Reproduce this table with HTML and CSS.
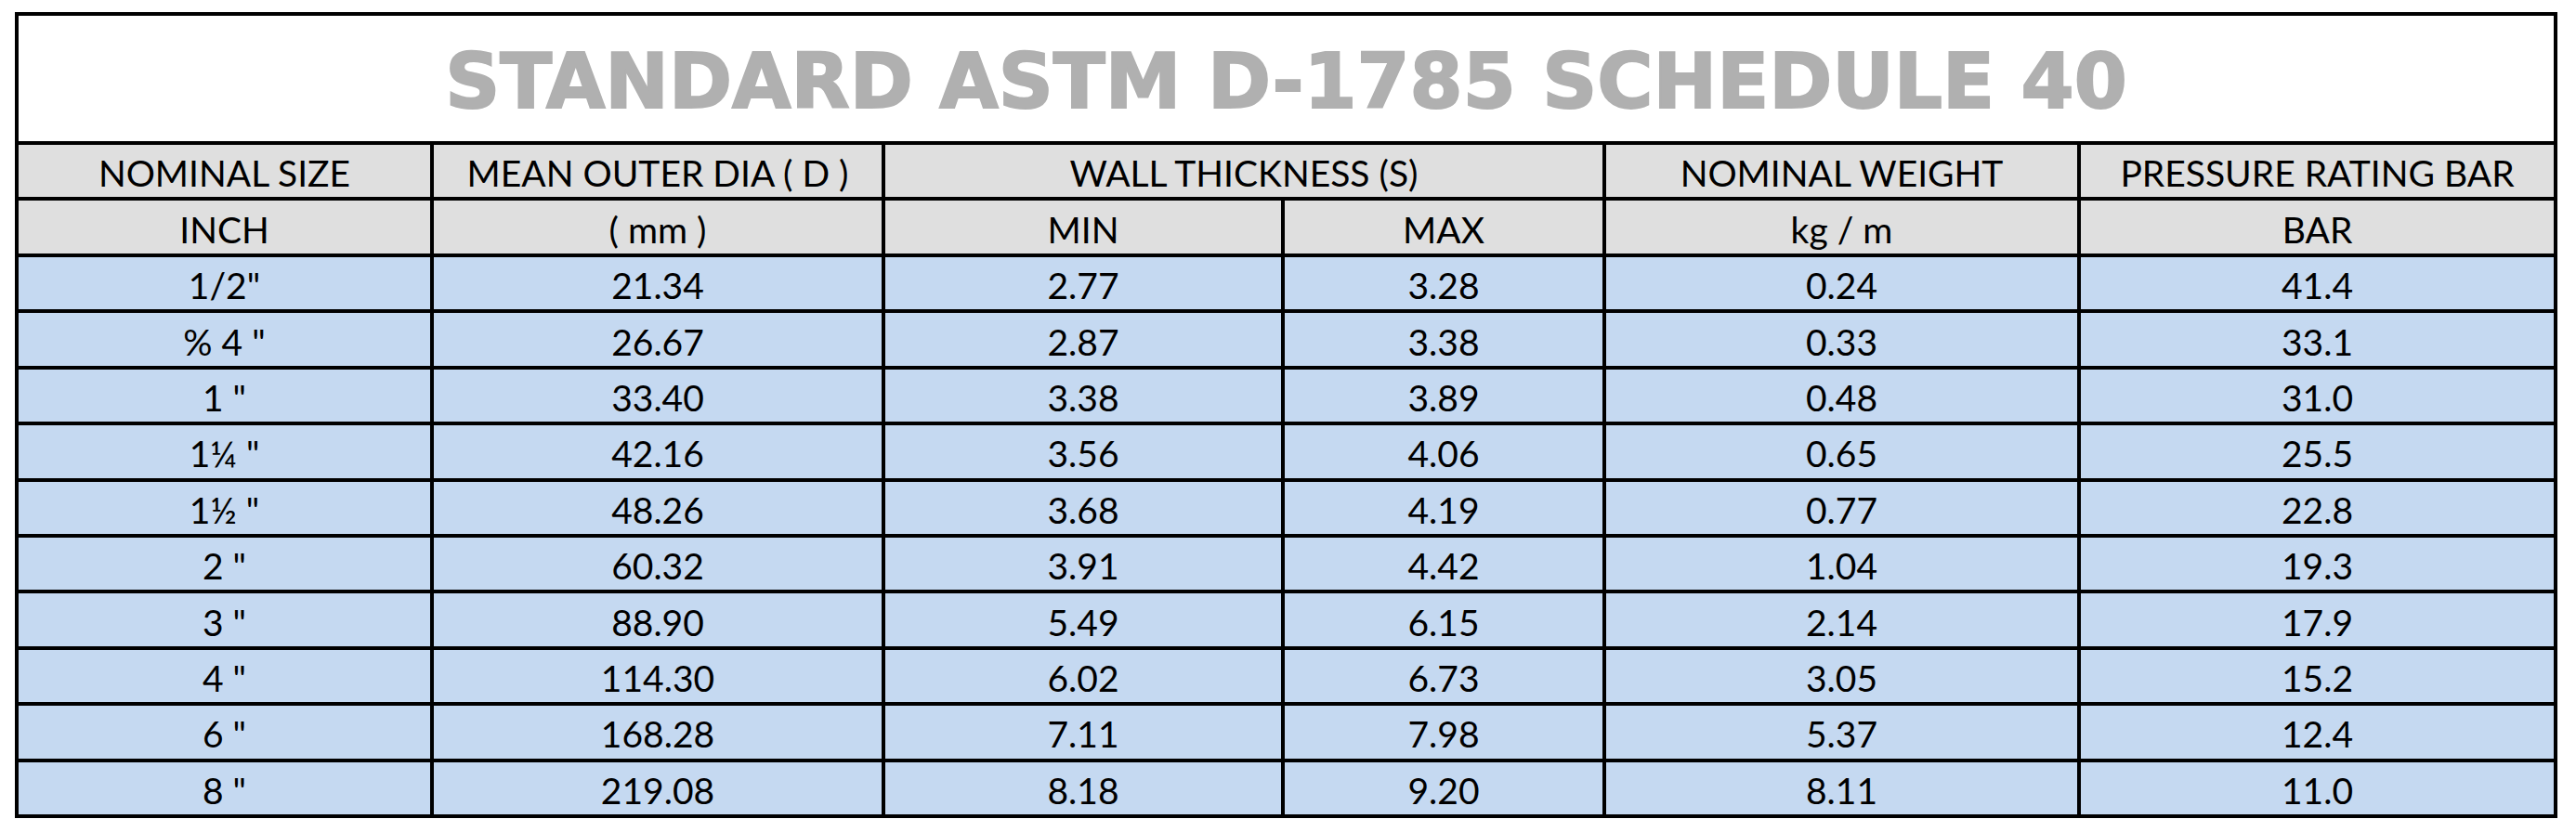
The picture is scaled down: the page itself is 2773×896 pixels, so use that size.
FILE: index.html
```html
<!DOCTYPE html>
<html lang="en">
<head>
    <meta charset="UTF-8">
    <meta name="viewport" content="width=device-width, initial-scale=1.0">
    <title>Standard ASTM D-1785 Schedule 40</title>
    <link rel="stylesheet" href="styles.css">
</head>
<body>
    <table class="spec-table">
        <colgroup>
            <col class="col-size">
            <col class="col-dia">
            <col class="col-min">
            <col class="col-max">
            <col class="col-weight">
            <col class="col-pressure">
        </colgroup>
        <thead>
            <tr class="title-row">
                <th colspan="6">STANDARD ASTM D-1785 SCHEDULE 40</th>
            </tr>
            <tr class="head-row">
                <th>NOMINAL SIZE</th>
                <th>MEAN OUTER DIA ( D )</th>
                <th colspan="2">WALL THICKNESS (S)</th>
                <th>NOMINAL WEIGHT</th>
                <th>PRESSURE RATING BAR</th>
            </tr>
            <tr class="head-row unit-row">
                <th>INCH</th>
                <th>( mm )</th>
                <th>MIN</th>
                <th>MAX</th>
                <th>kg / m</th>
                <th>BAR</th>
            </tr>
        </thead>
        <tbody>
            <tr><td>1/2"</td><td>21.34</td><td>2.77</td><td>3.28</td><td>0.24</td><td>41.4</td></tr>
            <tr><td>% 4 "</td><td>26.67</td><td>2.87</td><td>3.38</td><td>0.33</td><td>33.1</td></tr>
            <tr><td>1 "</td><td>33.40</td><td>3.38</td><td>3.89</td><td>0.48</td><td>31.0</td></tr>
            <tr><td>1¼ "</td><td>42.16</td><td>3.56</td><td>4.06</td><td>0.65</td><td>25.5</td></tr>
            <tr><td>1½ "</td><td>48.26</td><td>3.68</td><td>4.19</td><td>0.77</td><td>22.8</td></tr>
            <tr><td>2 "</td><td>60.32</td><td>3.91</td><td>4.42</td><td>1.04</td><td>19.3</td></tr>
            <tr><td>3 "</td><td>88.90</td><td>5.49</td><td>6.15</td><td>2.14</td><td>17.9</td></tr>
            <tr><td>4 "</td><td>114.30</td><td>6.02</td><td>6.73</td><td>3.05</td><td>15.2</td></tr>
            <tr><td>6 "</td><td>168.28</td><td>7.11</td><td>7.98</td><td>5.37</td><td>12.4</td></tr>
            <tr><td>8 "</td><td>219.08</td><td>8.18</td><td>9.20</td><td>8.11</td><td>11.0</td></tr>
        </tbody>
    </table>
</body>
</html>
```

FILE: styles.css
```css
* {
    box-sizing: border-box;
    margin: 0;
    padding: 0;
}

body {
    font-family: Lato, "Open Sans", sans-serif;
    background-color: white;
    padding: 13px 0 0 16px;
}

.spec-table {
    table-layout: fixed;
    width: 2737px;
    border-collapse: separate;
    border-spacing: 4px;
    background-color: black;
}

.col-size { width: 443px; }
.col-dia { width: 482px; }
.col-min { width: 426px; }
.col-max { width: 342px; }
.col-weight { width: 507px; }
.col-pressure { width: 509px; }

.spec-table th,
.spec-table td {
    padding: 4px 0 0;
    text-align: center;
    vertical-align: middle;
    font-size: 39px;
    font-weight: normal;
    line-height: 46px;
    color: #000;
    white-space: nowrap;
}

/* heavy grey heading, thickened a little with a stroke */
.title-row th {
    height: 135px;
    padding: 6px 0 0;
    background-color: white;
    font-family: "DejaVu Sans", sans-serif;
    font-weight: bold;
    font-size: 82px;
    line-height: 100px;
    color: #b0b0b0;
    -webkit-text-stroke: 2px #b0b0b0;
}

.head-row th {
    height: 56px;
    background-color: #dfdfdf;
}

.unit-row th {
    height: 57px;
}

.spec-table td {
    height: 56.4px;
    background-color: #c5d9f1;
}
```
